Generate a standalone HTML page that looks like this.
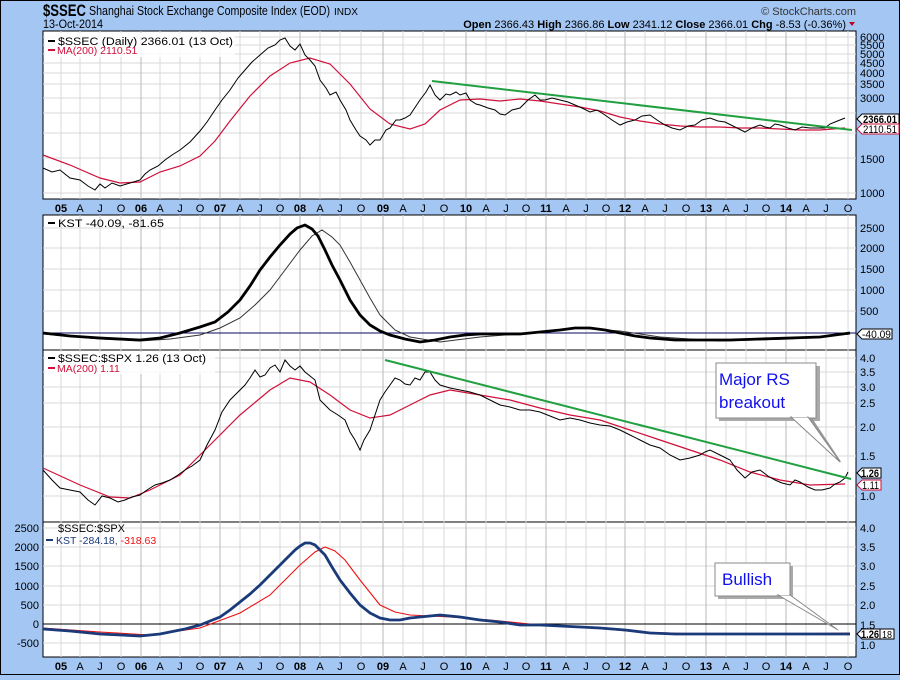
<!DOCTYPE html>
<html><head><meta charset="utf-8"><style>
body{margin:0;width:900px;height:675px;overflow:hidden;background:#a4c6f2;font-family:"Liberation Sans",sans-serif}
svg text{font-family:"Liberation Sans",sans-serif}
</style></head><body>
<svg width="900" height="675" xmlns="http://www.w3.org/2000/svg">
<rect x="0" y="0" width="900" height="675" fill="#a4c6f2"/>
<rect x="0.5" y="0.5" width="899" height="674" fill="none" stroke="#000"/>
<!-- header -->
<text x="43" y="16" font-family="Liberation Serif" font-weight="bold" font-size="17" textLength="43" lengthAdjust="spacingAndGlyphs" fill="#000">$SSEC</text>
<text x="89" y="15" font-size="12.5" textLength="241" lengthAdjust="spacingAndGlyphs">Shanghai Stock Exchange Composite Index (EOD)</text>
<text x="334" y="15" font-size="10.5" textLength="24" lengthAdjust="spacingAndGlyphs">INDX</text>
<text x="43" y="28" font-size="12" textLength="60" lengthAdjust="spacingAndGlyphs">13-Oct-2014</text>
<text x="856" y="15" font-size="11" text-anchor="end" fill="#333">© StockCharts.com</text>
<text x="846" y="28" font-size="11" text-anchor="end"><tspan font-weight="bold">Open</tspan> 2366.43  <tspan font-weight="bold">High</tspan> 2366.86  <tspan font-weight="bold">Low</tspan> 2341.12  <tspan font-weight="bold">Close</tspan> 2366.01  <tspan font-weight="bold">Chg</tspan> -8.53 (-0.36%)</text>
<path d="M849 22 L855 22 L852 26Z" fill="#c00020"/>
<!-- panels -->
<rect x="43" y="31" width="813" height="168" fill="#fff" stroke="#000"/>
<rect x="43" y="215" width="813" height="135" fill="#fff" stroke="#000"/>
<rect x="43" y="350" width="813" height="172" fill="#fff" stroke="#000"/>
<rect x="43" y="522" width="813" height="135" fill="#fff" stroke="#000"/>
<g stroke="#d8d8d8" stroke-width="1">
<path d="M61 31V199M80 31V199M100 31V199M121 31V199M141 31V199M160 31V199M180 31V199M200 31V199M220 31V199M240 31V199M260 31V199M280 31V199M300 31V199M320 31V199M340 31V199M361 31V199M383 31V199M403 31V199M423 31V199M444 31V199M466 31V199M486 31V199M506 31V199M526 31V199M546 31V199M566 31V199M586 31V199M606 31V199M625 31V199M645 31V199M665 31V199M686 31V199M706 31V199M726 31V199M746 31V199M766 31V199M786 31V199M806 31V199M826 31V199M848 31V199"/>
<path d="M61 215V657M80 215V657M100 215V657M121 215V657M141 215V657M160 215V657M180 215V657M200 215V657M220 215V657M240 215V657M260 215V657M280 215V657M300 215V657M320 215V657M340 215V657M361 215V657M383 215V657M403 215V657M423 215V657M444 215V657M466 215V657M486 215V657M506 215V657M526 215V657M546 215V657M566 215V657M586 215V657M606 215V657M625 215V657M645 215V657M665 215V657M686 215V657M706 215V657M726 215V657M746 215V657M766 215V657M786 215V657M806 215V657M826 215V657M848 215V657"/>
<path d="M43 37H856M43 45H856M43 54H856M43 63H856M43 73H856M43 84H856M43 98H856M43 113H856M43 133H856M43 158H856M43 193H856"/>
<path d="M43 228H856M43 248H856M43 269H856M43 290H856M43 311H856"/>
<path d="M43 358H856M43 372H856M43 387H856M43 403H856M43 427H856M43 456H856M43 496H856"/>
<path d="M43 528H856M43 547H856M43 566H856M43 586H856M43 605H856M43 643H856"/>
</g>
<g stroke="#b8b8b8"><path d="M141 31V199M220 31V199M300 31V199M383 31V199M466 31V199M546 31V199M625 31V199M706 31V199M786 31V199M141 215V657M220 215V657M300 215V657M383 215V657M466 215V657M546 215V657M625 215V657M706 215V657M786 215V657"/></g>
<path d="M43 624H856" stroke="#000"/>
<path d="M43 333H856" stroke="#0a0a60"/>
<!-- panel 1 -->
<polyline fill="none" stroke="#d0103a" stroke-width="1.2" points="43,155 70,165 100,178 120,183 140,182 160,172 180,166 200,156 215,141 230,121 250,96 270,76 290,63 310,58 330,64 350,84 370,109 390,124 410,129 425,124 440,110 460,100 480,99 500,101 520,99 540,101 560,104 580,107 600,111 620,117 640,121 660,124 680,126 700,127 720,127 740,128 760,128 780,129 800,130 820,130 845,128"/>
<polyline fill="none" stroke="#000" stroke-width="1" points="43,168 52,172 60,170 70,178 80,180 88,186 95,190 100,184 105,188 112,183 120,186 130,183 140,180 145,174 150,170 158,166 165,160 172,155 180,150 190,142 200,131 207,122 215,110 222,100 230,90 238,78 245,70 252,62 260,55 268,48 275,45 280,40 285,38 290,46 295,50 300,44 305,55 310,60 315,66 320,80 326,88 330,95 336,92 340,100 346,110 350,120 356,130 360,136 366,140 370,145 375,140 380,140 386,130 390,128 396,120 400,120 405,118 410,115 416,106 420,100 426,92 430,85 435,95 440,100 446,94 450,95 456,92 460,95 466,93 470,100 476,104 480,105 488,108 495,110 500,114 505,115 512,110 520,108 528,100 535,95 540,100 545,100 552,98 560,100 568,102 575,105 582,108 590,112 597,110 605,115 612,120 620,125 627,122 635,120 642,116 650,115 657,120 665,125 672,128 680,130 688,126 695,125 702,120 710,118 718,121 725,122 735,127 745,132 752,128 760,125 765,127 770,128 775,124 780,125 788,128 795,130 802,127 810,128 818,128 825,128 830,124 835,122 840,120 845,118"/>
<line x1="432" y1="81" x2="852" y2="130" stroke="#20a040" stroke-width="2"/>
<rect x="45" y="33" width="190" height="24" fill="#fff" opacity="0.85"/>
<line x1="48" y1="41" x2="55" y2="41" stroke="#000" stroke-width="2"/>
<text x="58" y="45" font-size="11" font-family="DejaVu Sans Mono, Liberation Mono" textLength="175" lengthAdjust="spacingAndGlyphs">$SSEC (Daily) 2366.01 (13 Oct)</text>
<line x1="48" y1="50" x2="55" y2="50" stroke="#d0103a" stroke-width="2"/>
<text x="57" y="54" font-size="10.5" fill="#d0103a">MA(200) 2110.51</text>
<g font-size="11" fill="#000">
<text x="860" y="41">6000</text><text x="860" y="49">5500</text><text x="860" y="58">5000</text><text x="860" y="67">4500</text><text x="860" y="77">4000</text><text x="860" y="88">3500</text><text x="860" y="102">3000</text><text x="860" y="163">1500</text><text x="860" y="197">1000</text>
</g>
<path d="M857 119 L862 114 H899 V124 H862Z" fill="#fff" stroke="#000"/>
<text x="863" y="123" font-size="11" font-weight="bold" textLength="34" lengthAdjust="spacingAndGlyphs">2366.01</text>
<path d="M857 129 L862 124 H899 V134 H862Z" fill="#fff" stroke="#d0103a"/>
<text x="863" y="133" font-size="11" textLength="34" lengthAdjust="spacingAndGlyphs">2110.51</text>
<!-- x axis labels -->
<g font-size="11" text-anchor="middle" font-family="Liberation Sans">
<g transform="translate(0,212)"><text x="61" font-weight="bold">05</text><text x="80">A</text><text x="100">J</text><text x="121">O</text><text x="141" font-weight="bold">06</text><text x="160">A</text><text x="180">J</text><text x="200">O</text><text x="220" font-weight="bold">07</text><text x="240">A</text><text x="260">J</text><text x="280">O</text><text x="300" font-weight="bold">08</text><text x="320">A</text><text x="340">J</text><text x="361">O</text><text x="383" font-weight="bold">09</text><text x="403">A</text><text x="423">J</text><text x="444">O</text><text x="466" font-weight="bold">10</text><text x="486">A</text><text x="506">J</text><text x="526">O</text><text x="546" font-weight="bold">11</text><text x="566">A</text><text x="586">J</text><text x="606">O</text><text x="625" font-weight="bold">12</text><text x="645">A</text><text x="665">J</text><text x="686">O</text><text x="706" font-weight="bold">13</text><text x="726">A</text><text x="746">J</text><text x="766">O</text><text x="786" font-weight="bold">14</text><text x="806">A</text><text x="826">J</text><text x="848">O</text></g>
<g transform="translate(0,670)"><text x="61" font-weight="bold">05</text><text x="80">A</text><text x="100">J</text><text x="121">O</text><text x="141" font-weight="bold">06</text><text x="160">A</text><text x="180">J</text><text x="200">O</text><text x="220" font-weight="bold">07</text><text x="240">A</text><text x="260">J</text><text x="280">O</text><text x="300" font-weight="bold">08</text><text x="320">A</text><text x="340">J</text><text x="361">O</text><text x="383" font-weight="bold">09</text><text x="403">A</text><text x="423">J</text><text x="444">O</text><text x="466" font-weight="bold">10</text><text x="486">A</text><text x="506">J</text><text x="526">O</text><text x="546" font-weight="bold">11</text><text x="566">A</text><text x="586">J</text><text x="606">O</text><text x="625" font-weight="bold">12</text><text x="645">A</text><text x="665">J</text><text x="686">O</text><text x="706" font-weight="bold">13</text><text x="726">A</text><text x="746">J</text><text x="766">O</text><text x="786" font-weight="bold">14</text><text x="806">A</text><text x="826">J</text><text x="848">O</text></g>
</g>
<!-- panel 2 -->
<polyline fill="none" stroke="#333" stroke-width="1" points="43,334 100,339 140,341 170,339 200,335 220,328 240,318 255,305 270,290 285,270 300,250 312,236 322,230 332,237 340,245 350,262 360,280 370,298 380,315 395,330 410,337 440,342 480,337 530,333 580,328 620,331 660,337 720,341 790,339 850,334"/>
<polyline fill="none" stroke="#000" stroke-width="2.8" points="43,333 70,336 100,338 140,340 160,338 180,333 200,327 215,322 228,312 240,300 250,286 260,270 270,257 280,245 290,234 297,228 305,225 312,229 318,236 325,250 332,265 340,280 350,300 360,315 370,325 380,331 390,335 405,339 420,342 435,340 450,337 465,335 480,334 500,334 520,334 540,332 560,330 575,328 590,328 605,330 620,333 635,336 650,338 675,340 700,340 730,340 760,339 790,338 820,337 850,333"/>
<line x1="48" y1="223" x2="55" y2="223" stroke="#000" stroke-width="2"/>
<text x="58" y="227" font-size="11" font-family="DejaVu Sans Mono, Liberation Mono" textLength="106" lengthAdjust="spacingAndGlyphs">KST -40.09, -81.65</text>
<g font-size="11"><text x="860" y="232">2500</text><text x="860" y="252">2000</text><text x="860" y="273">1500</text><text x="860" y="294">1000</text><text x="860" y="315">500</text></g>
<path d="M857 334 L862 329 H892 V339 H862Z" fill="#fff" stroke="#000"/>
<text x="862" y="338" font-size="11" textLength="29" lengthAdjust="spacingAndGlyphs">-40.09</text>
<!-- panel 3 -->
<polyline fill="none" stroke="#d0103a" stroke-width="1.2" points="43,468 80,485 110,497 130,498 150,490 180,475 210,445 240,415 270,390 290,378 310,382 330,395 350,410 370,418 390,415 410,405 430,395 450,390 480,395 510,400 540,408 570,415 600,420 630,430 660,440 690,450 720,460 750,472 780,480 810,485 845,484"/>
<polyline fill="none" stroke="#000" stroke-width="1" points="43,470 52,480 60,488 70,490 80,492 88,500 95,505 102,496 110,498 118,502 125,500 132,497 140,495 147,490 155,485 162,483 170,480 178,475 185,470 192,466 200,460 207,445 215,430 222,412 230,400 238,392 245,385 250,378 255,370 260,377 265,375 270,368 275,365 280,372 285,360 290,366 295,370 300,366 305,372 310,376 315,380 318,392 320,400 325,405 330,410 338,415 345,420 350,432 355,440 360,450 364,440 370,430 375,415 380,400 385,392 390,385 395,378 400,380 405,384 410,385 415,378 420,380 425,372 430,372 435,380 440,385 450,388 460,390 470,392 480,395 490,400 500,405 510,407 520,410 530,410 540,412 550,416 560,420 570,418 580,420 590,423 600,425 610,426 620,430 630,435 640,440 650,445 660,448 670,455 680,460 690,458 700,455 705,452 710,450 720,455 730,460 737,470 745,478 752,472 760,470 768,476 775,480 782,483 790,485 795,480 800,482 808,487 815,490 822,490 830,488 835,484 840,482 845,478 848,472"/>
<line x1="385" y1="360" x2="851" y2="479" stroke="#20a040" stroke-width="2"/>
<rect x="45" y="352" width="170" height="22" fill="#fff" opacity="0.85"/>
<line x1="48" y1="358" x2="55" y2="358" stroke="#000" stroke-width="2"/>
<text x="58" y="362" font-size="11" font-family="DejaVu Sans Mono, Liberation Mono" textLength="148" lengthAdjust="spacingAndGlyphs">$SSEC:$SPX 1.26 (13 Oct)</text>
<line x1="48" y1="368" x2="55" y2="368" stroke="#d0103a" stroke-width="2"/>
<text x="57" y="372" font-size="10.5" fill="#d0103a">MA(200) 1.11</text>
<g font-size="11"><text x="860" y="362">4.0</text><text x="860" y="376">3.5</text><text x="860" y="391">3.0</text><text x="860" y="407">2.5</text><text x="860" y="431">2.0</text><text x="860" y="460">1.5</text><text x="860" y="500">1.0</text></g>
<path d="M857 473 L862 468 H881 V478 H862Z" fill="#fff" stroke="#000"/>
<text x="861" y="477" font-size="11" font-weight="bold" textLength="18" lengthAdjust="spacingAndGlyphs">1.26</text>
<path d="M857 485 L862 480 H881 V490 H862Z" fill="#fff" stroke="#d0103a"/>
<text x="862" y="489" font-size="11" textLength="17" lengthAdjust="spacingAndGlyphs">1.11</text>
<!-- callout 1 -->
<rect x="719" y="366" width="101" height="55" fill="#aaa"/>
<polygon points="795,418 812,418 842,463" fill="#999"/>
<rect x="716" y="363" width="100" height="55" fill="#fff" stroke="#888"/>
<polygon points="791,417 808,417 840,462" fill="#fff" stroke="#888"/>
<rect x="792" y="413" width="15" height="4" fill="#fff"/>
<text x="719" y="385" font-size="17" fill="#1010ee">Major RS</text>
<text x="719" y="408" font-size="17" fill="#1010ee">breakout</text>
<!-- panel 4 -->
<polyline fill="none" stroke="#ee1010" stroke-width="1.1" points="43,628 100,632 150,635 200,628 240,613 270,595 300,565 315,552 325,547 335,551 345,560 360,580 380,605 395,612 410,615 450,617 490,620 530,624 580,627 640,632 700,634 780,634 850,633"/>
<polyline fill="none" stroke="#1a3a7a" stroke-width="2.8" points="43,629 70,631 100,634 140,636 160,634 170,632 185,629 200,625 210,621 220,617 230,610 240,602 250,594 260,585 270,575 280,565 288,557 295,550 300,546 305,543 310,543 315,545 320,550 325,555 332,567 340,580 350,593 360,605 370,613 380,618 390,620 400,620 410,618 420,617 430,616 440,615 460,617 480,620 500,622 520,625 540,625 560,626 580,627 600,628 625,630 650,633 675,634 700,634 730,634 760,634 790,634 820,634 850,634"/>
<text x="58" y="532" font-size="11" font-family="DejaVu Sans Mono, Liberation Mono" textLength="67" lengthAdjust="spacingAndGlyphs">$SSEC:$SPX</text>
<line x1="46" y1="540" x2="53" y2="540" stroke="#1a3a7a" stroke-width="2"/>
<text x="56" y="544" font-size="10.5" fill="#1a3a7a">KST -284.18, <tspan fill="#ee1010">-318.63</tspan></text>
<g font-size="11" text-anchor="end"><text x="39" y="532">2500</text><text x="39" y="551">2000</text><text x="39" y="570">1500</text><text x="39" y="590">1000</text><text x="39" y="609">500</text><text x="39" y="628">0</text><text x="39" y="647">-500</text></g>
<g font-size="11"><text x="860" y="532">4.0</text><text x="860" y="551">3.5</text><text x="860" y="570">3.0</text><text x="860" y="590">2.5</text><text x="860" y="609">2.0</text><text x="860" y="629">1.5</text><text x="860" y="649">1.0</text></g>
<path d="M857 634 L862 629 H880 V639 H862Z" fill="#fff" stroke="#000"/>
<text x="861" y="638" font-size="11" font-weight="bold" textLength="18" lengthAdjust="spacingAndGlyphs">1.26</text>
<rect x="880" y="629" width="14" height="10" fill="#fff" stroke="#000"/>
<text x="882" y="638" font-size="10" textLength="10" lengthAdjust="spacingAndGlyphs">18</text>
<!-- callout 2 -->
<rect x="718" y="566" width="75" height="33" fill="#aaa"/>
<rect x="715" y="563" width="75" height="33" fill="#fff" stroke="#888"/>
<polygon points="778,595 790,595 838,630" fill="#fff" stroke="#888"/>
<rect x="779" y="591" width="10" height="4" fill="#fff"/>
<text x="722" y="585" font-size="17" fill="#1010ee">Bullish</text>
</svg>
</body></html>
